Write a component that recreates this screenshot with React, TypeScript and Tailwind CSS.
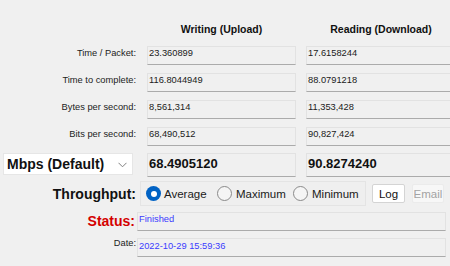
import React from "react";

const F = "font-['Liberation_Sans',Arial,sans-serif]";

function Field({ children, className = "" }: { children?: React.ReactNode; className?: string }) {
  return (
    <div
      className={`h-[19px] border border-[#e2e2e2] border-b-[#ababab] bg-[#f0f0f0] pl-[1px] pt-[1px] text-[9.3px] leading-[11px] text-[#1a1a1a] ${className}`}
    >
      {children}
    </div>
  );
}

function Label({ children }: { children: React.ReactNode }) {
  return <div className="pr-[1px] pt-[2px] text-right text-[9.3px] leading-[11px] text-[#222]">{children}</div>;
}

function Radio({ checked }: { checked?: boolean }) {
  if (checked) {
    return (
      <div className="flex h-[15px] w-[15px] items-center justify-center rounded-full bg-[#0062c4]">
        <div className="h-[6px] w-[6px] rounded-full bg-white" />
      </div>
    );
  }
  return <div className="h-[15px] w-[15px] rounded-full border border-[#8a8a8a] bg-[#f5f5f5]" />;
}

export default function App() {
  const rows = [
    ["Time / Packet:", "23.360899", "17.6158244"],
    ["Time to complete:", "116.8044949", "88.0791218"],
    ["Bytes per second:", "8,561,314", "11,353,428"],
    ["Bits per second:", "68,490,512", "90,827,424"],
  ];
  return (
    <div className={`${F} flex h-[266px] w-[450px] flex-col overflow-hidden bg-[#f0f0f0]`}>
      {/* header */}
      <div className="mt-[22px] grid h-[14px] grid-cols-[137px_149px_150px] gap-x-[10px]">
        <div />
        <div className="text-center text-[10.5px] font-bold leading-[14px] text-[#111]">Writing (Upload)</div>
        <div className="text-center text-[10.5px] font-bold leading-[14px] text-[#111]">Reading (Download)</div>
      </div>

      <div className="mt-[10px] flex flex-col gap-[8px]">
        {rows.map(([l, a, b]) => (
          <div key={l} className="grid grid-cols-[137px_149px_150px] gap-x-[10px]">
            <Label>{l}</Label>
            <Field>{a}</Field>
            <Field>{b}</Field>
          </div>
        ))}
      </div>

      {/* big row */}
      <div className="mt-[7px] grid h-[24px] grid-cols-[137px_149px_150px] gap-x-[10px]">
        <div className="pl-[3px] pr-[4px]">
          <div className="flex h-[22px] items-center justify-between border border-[#e6e6e6] bg-white pl-[3px] pr-[5px]">
            <span className="text-[14px] font-bold leading-[16px] text-[#111]">Mbps (Default)</span>
            <svg width="9" height="6" viewBox="0 0 9 6" className="mt-[1px]">
              <path d="M0.5 0.8 L4.5 4.8 L8.5 0.8" fill="none" stroke="#808080" strokeWidth="1" />
            </svg>
          </div>
        </div>
        <div className="h-[24px] border border-[#e2e2e2] border-b-[#ababab] bg-[#f0f0f0] pl-[1px] pt-[2px] text-[13px] font-bold leading-[16px] text-[#111]">
          68.4905120
        </div>
        <div className="h-[24px] border border-[#e2e2e2] border-b-[#ababab] bg-[#f0f0f0] pl-[1px] pt-[2px] text-[13px] font-bold leading-[16px] text-[#111]">
          90.8274240
        </div>
      </div>

      {/* throughput */}
      <div className="mt-[4px] flex h-[25px] items-center">
        <div className="w-[137px] pr-[1px] text-right text-[14px] font-bold leading-[16px] text-[#111]">Throughput:</div>
        <div className="ml-[3px] flex h-[25px] w-[226px] items-center border border-[#e4e4e4] bg-[#efefef] pl-[5px] text-[11.5px] leading-[14px] text-[#1a1a1a]">
          <div className="flex w-[71px] items-center gap-[3px]">
            <Radio checked />
            <span>Average</span>
          </div>
          <div className="flex w-[76px] items-center gap-[4px]">
            <Radio />
            <span>Maximum</span>
          </div>
          <div className="flex items-center gap-[4px]">
            <Radio />
            <span>Minimum</span>
          </div>
        </div>
        <div className="ml-[6px] flex h-[19px] w-[33px] items-center justify-center rounded-[2px] border border-[#d4d4d4] bg-white text-[11.5px] leading-[14px] text-[#111]">
          Log
        </div>
        <div className="ml-[7px] flex h-[19px] w-[32px] items-center justify-center rounded-[2px] border border-[#ebebeb] bg-[#f7f7f7] text-[11.5px] leading-[14px] text-[#a3a3a3]">
          Email
        </div>
      </div>

      {/* status */}
      <div className="mt-[6px] grid grid-cols-[137px_309px]">
        <div className="pr-[2px] pt-[1px] text-right text-[14px] font-bold leading-[16px] text-[#d40000]">Status:</div>
        <Field className="text-[#3b3bff]">Finished</Field>
      </div>

      {/* date */}
      <div className="mt-[7px] grid grid-cols-[137px_309px]">
        <div className="pr-[1px] pt-[0px] text-right text-[9.3px] leading-[11px] text-[#222]">Date:</div>
        <Field className="pt-[2px] text-[#3b3bff]">2022-10-29 15:59:36</Field>
      </div>
    </div>
  );
}
